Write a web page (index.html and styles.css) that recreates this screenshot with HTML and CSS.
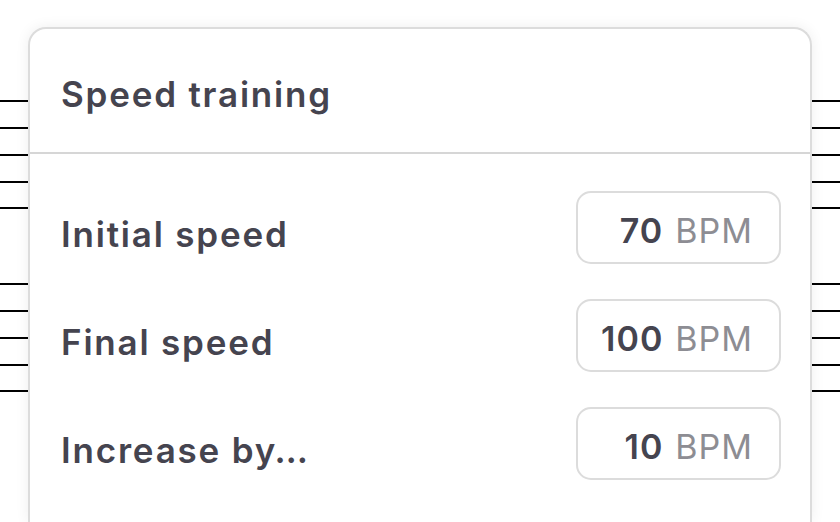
FILE: index.html
```html
<!DOCTYPE html>
<html lang="en">

<head>
	<title>Speed training</title>
	<meta charset="utf-8">
	<meta name="viewport" content="width=device-width, user-scalable=no">
	<link rel="stylesheet" href="styles.css">
</head>

<body>
	<div class="staff">
		<div class="sheet">
			<div class="sheet-header">
				<h1 class="sheet-title">Speed training</h1>
			</div>

			<div class="sheet-body">
				<div class="field">
					<span class="field-label">Initial speed</span>
					<div class="field-box"><b>70</b> <span class="unit">BPM</span></div>
				</div>
				<div class="field">
					<span class="field-label">Final speed</span>
					<div class="field-box"><b>100</b> <span class="unit">BPM</span></div>
				</div>
				<div class="field">
					<span class="field-label">Increase by…</span>
					<div class="field-box"><b>10</b> <span class="unit">BPM</span></div>
				</div>
			</div>
		</div>
	</div>
</body>

</html>
```

FILE: styles.css
```css
html,
body {
	margin: 0;
	height: 100%;
	overflow: hidden;
	background: white;
}

body {
	font-family: Inter, "Open Sans", sans-serif;
	color: #45444f;
}

/* music staff drawn behind the sheet: two groups of five lines */
.staff {
	height: 100%;
	padding: 27px 28px 0 28px;
	box-sizing: border-box;
	display: flex;
	flex-direction: column;
	background-image:
		linear-gradient(#000, #000), linear-gradient(#000, #000),
		linear-gradient(#000, #000), linear-gradient(#000, #000),
		linear-gradient(#000, #000), linear-gradient(#000, #000),
		linear-gradient(#000, #000), linear-gradient(#000, #000),
		linear-gradient(#000, #000), linear-gradient(#000, #000);
	background-size: 100% 2px;
	background-repeat: no-repeat;
	background-position:
		0 100px, 0 127px, 0 154px, 0 181px, 0 207px,
		0 283px, 0 310px, 0 337px, 0 364px, 0 390px;
}

.sheet {
	flex: 1;
	background: white;
	border: 2px solid #dcdcdc;
	border-bottom: none;
	border-radius: 18px 18px 0 0;
	box-shadow: 0 0 14px rgba(0, 0, 0, 0.07);
}

.sheet-header {
	height: 123px;
	border-bottom: 2px solid #d6d6d6;
	padding: 0 31px;
	display: flex;
	align-items: center;
}

.sheet-title {
	margin: 0;
	font-size: 35px;
	font-weight: 600;
	letter-spacing: 1.8px;
	padding-top: 6px;
}

.sheet-body {
	padding: 37px 29px 0 31px;
	display: flex;
	flex-direction: column;
	gap: 35px;
}

.field {
	display: flex;
	align-items: center;
	justify-content: space-between;
	height: 73px;
}

.field-label {
	font-size: 35px;
	font-weight: 600;
	letter-spacing: 1.8px;
	padding-top: 12px;
}

.field-box {
	width: 205px;
	height: 73px;
	box-sizing: border-box;
	border: 2px solid #dcdcdc;
	border-radius: 15px;
	padding: 6px 27px 0 0;
	display: flex;
	align-items: center;
	justify-content: flex-end;
	gap: 12px;
	font-size: 34px;
	letter-spacing: 1px;
}

.field-box b {
	font-weight: 600;
}

.unit {
	color: #8d8d93;
	font-weight: 400;
	margin-right: -1px;
}
```
